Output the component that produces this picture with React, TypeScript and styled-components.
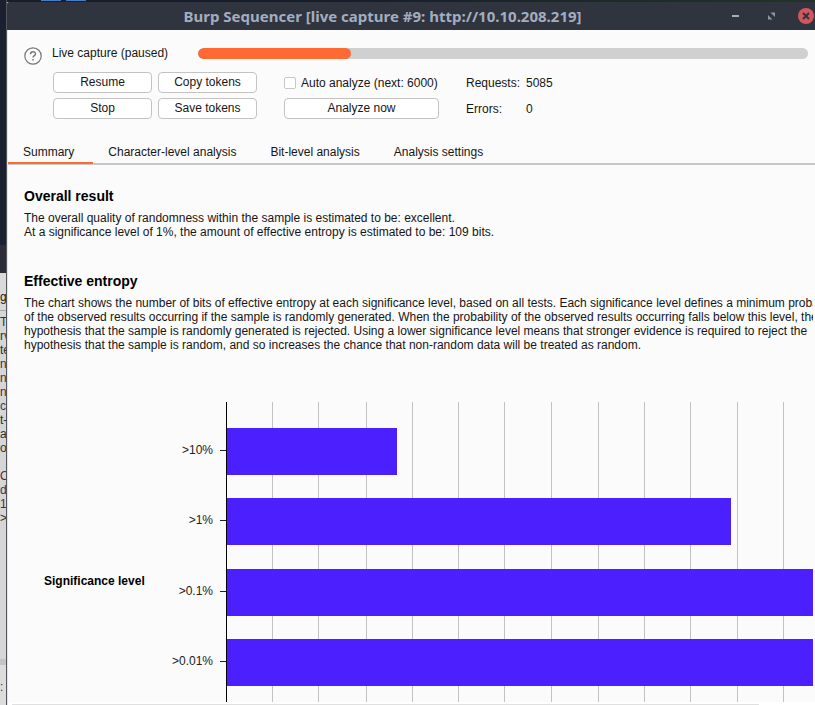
import React from "react";
import styled, { createGlobalStyle } from "styled-components";

const GlobalStyle = createGlobalStyle`
  * { box-sizing: border-box; }
  html, body, #root { height: 100%; }
  body {
    margin: 0;
    overflow: hidden;
    background: #1a2030;
    color: #161616;
    font-family: "Liberation Sans", Arial, sans-serif;
    font-size: 12px;
    line-height: 14px;
  }
`;

const Desktop = styled.div`
  display: grid;
  grid-template-columns: 7px minmax(0, 1fr);
  height: 100vh;
  overflow: hidden;
`;

const BackWindow = styled.aside`
  display: flex;
  flex-direction: column;
  overflow: hidden;
  padding-top: 245px;
  border-right: 1px solid #55565c;
  white-space: nowrap;
`;

const BackTitle = styled.div`
  flex: none;
  height: 28px;
  background: #2b2c37;
`;

const BackHeading = styled.div`
  flex: none;
  height: 38px;
  padding-top: 17px;
  background: #d9d9d9;
  border-bottom: 1px solid #a9a9a9;
`;

const BackLines = styled.div`
  display: flex;
  flex: 1;
  flex-direction: column;
  padding-top: 4px;
  background: #d6d6d6;
`;

const BackLine = styled.span<{ $color?: string }>`
  height: 14px;
  min-height: 14px;
  color: ${(p) => p.$color ?? "#2e2e34"};
`;

const BackFooter = styled.div`
  flex: none;
  height: 46px;
  padding-top: 15px;
  background: #dcdcdc;
  border-top: 6px solid #c4c4c4;
  color: #702040;
`;

const Front = styled.div`
  display: flex;
  flex-direction: column;
  min-width: 0;
`;

const TopStrip = styled.div`
  display: flex;
  flex: none;
  gap: 5px;
  height: 2px;
  padding-left: 34px;
  background: linear-gradient(90deg, #171d2b 40%, #223326);
`;

const TopMark = styled.span`
  width: 20px;
  height: 1px;
  background: #4a7cc4;
`;

const AppWindow = styled.main`
  display: flex;
  flex: 1;
  flex-direction: column;
  min-height: 0;
  background: #fbfbfb;
  border-left: 1px solid #e4e4e4;
`;

const TitleBar = styled.header`
  display: grid;
  grid-template-columns: minmax(0, 1fr) auto;
  flex: none;
  align-items: center;
  height: 28px;
  margin-left: -1px;
  padding-right: 1px;
  background: #2f343f;
  border-radius: 2px 0 0 0;
`;

const Title = styled.h1`
  margin: 0;
  padding-left: 30px;
  color: #a3adbf;
  font-family: "Noto Sans", "Open Sans", sans-serif;
  font-size: 15px;
  font-weight: 700;
  line-height: 28px;
  text-align: center;
  white-space: nowrap;
`;

const WindowButtons = styled.div`
  display: flex;
  gap: 19px;
`;

const WindowButton = styled.button`
  display: flex;
  width: 16px;
  height: 16px;
  padding: 0;
  background: none;
  border: 0;
`;

const Controls = styled.section`
  display: flex;
  flex: none;
  gap: 9px;
  padding: 15px 7px 0 15px;
`;

const HelpButton = styled.button`
  display: flex;
  align-items: center;
  width: 20px;
  height: 22px;
  padding: 0;
  background: none;
  border: 0;
`;

const ControlsBody = styled.div`
  flex: 1;
  min-width: 0;
`;

const ProgressRow = styled.div`
  display: grid;
  grid-template-columns: 146px minmax(0, 1fr);
  align-items: center;
  height: 16px;
`;

const ProgressTrack = styled.div`
  height: 11px;
  overflow: hidden;
  background: #d0d0d0;
  border-radius: 6px;
`;

const ProgressFill = styled.div`
  height: 100%;
  background: #ff6a33;
  border-radius: 6px;
`;

const ControlsRow = styled.div`
  display: flex;
  gap: 27px;
  margin-top: 11px;
  padding-left: 1px;
`;

const ControlGrid = styled.div<{ $columns: string }>`
  display: grid;
  grid-template-columns: ${(p) => p.$columns};
  grid-auto-rows: 21px;
  gap: 5px 6px;
  align-items: center;
`;

const PushButton = styled.button`
  height: 21px;
  padding: 0;
  color: inherit;
  font: inherit;
  line-height: 19px;
  background: #fff;
  border: 1px solid #c3c3c3;
  border-radius: 4px;
`;

const CheckLabel = styled.label`
  display: flex;
  align-items: center;
  gap: 5px;
  white-space: nowrap;
`;

const CheckBox = styled.input`
  width: 12px;
  height: 12px;
  margin: 0;
  appearance: none;
  background: #fff;
  border: 1px solid #c8c8c8;
  border-radius: 2px;
`;

const Tabs = styled.nav`
  display: flex;
  flex: none;
  height: 46px;
  align-items: flex-end;
  border-bottom: 2px solid #c8c8c8;
`;

const Tab = styled.button<{ $active?: boolean }>`
  height: 22px;
  margin-bottom: -1px;
  padding: 0 19px 1px 15px;
  color: inherit;
  font: inherit;
  background: none;
  border: 0;
  border-bottom: 2px solid ${(p) => (p.$active ? "#ff6a33" : "transparent")};
`;

const Report = styled.section`
  flex: 1;
  min-height: 0;
  margin-right: 2px;
  padding-top: 23px;
  overflow: hidden;
`;

const Block = styled.article`
  padding-left: 16px;
  margin-bottom: 34px;
`;

const Heading = styled.h2`
  margin: 0 0 7px;
  color: #000;
  font-size: 14px;
  font-weight: 700;
  line-height: 16px;
`;

const Line = styled.p`
  margin: 0;
  white-space: nowrap;
`;

const Chart = styled.svg`
  display: block;
  margin-top: 50px;
`;

const ScrollBar = styled.div`
  flex: none;
  height: 3px;
  padding: 2px 0 0 4px;
  background: #fff;
`;

const ScrollThumb = styled.div`
  width: 93%;
  height: 1px;
  background: #e0e0e0;
`;

const backText = [
  { text: "T" }, { text: "rv" }, { text: "te" }, { text: "n", color: "#6b2038" },
  { text: "n", color: "#6b2038" }, { text: "n", color: "#6b2038" }, { text: "c", color: "#23426b" },
  { text: "t-" }, { text: "ar" }, { text: "or" }, { text: "" },
  { text: "OC", color: "#6b2038" }, { text: "de", color: "#23426b" }, { text: "1", color: "#6b2038" }, { text: ">" },
];

const tabs = ["Summary", "Character-level analysis", "Bit-level analysis", "Analysis settings"];

const gridLines = [264, 310, 358, 404, 450, 496, 543, 590, 636, 682, 729, 775];

const bars = [
  { label: ">10%", y: 26, width: 170 },
  { label: ">1%", y: 96, width: 504 },
  { label: ">0.1%", y: 167, width: 600 },
  { label: ">0.01%", y: 237, width: 600 },
];

export default function App() {
  return (
    <>
      <GlobalStyle />
      <Desktop>
        <BackWindow aria-hidden="true">
          <BackTitle />
          <BackHeading>gt</BackHeading>
          <BackLines>
            {backText.map((l, i) => (
              <BackLine key={i} $color={l.color}>{l.text}</BackLine>
            ))}
          </BackLines>
          <BackFooter>:</BackFooter>
        </BackWindow>
        <Front>
          <TopStrip>
            <TopMark />
            <TopMark />
          </TopStrip>
          <AppWindow>
            <TitleBar>
              <Title>Burp Sequencer [live capture #9: http://10.10.208.219]</Title>
              <WindowButtons>
                <WindowButton aria-label="Minimize">
                  <svg width="16" height="16"><rect x="4" y="7" width="7" height="2" fill="#a3adbf" /></svg>
                </WindowButton>
                <WindowButton aria-label="Restore">
                  <svg width="16" height="16" fill="#8f96a3">
                    <path d="M7.5 4.5H12V9zM5 7v4.500h4.500z" />
                  </svg>
                </WindowButton>
                <WindowButton aria-label="Close">
                  <svg width="16" height="16">
                    <circle cx="8" cy="8" r="8" fill="#d2575d" />
                    <path d="M5 5l6 6M11 5l-6 6" stroke="#2f343f" strokeWidth="2" />
                  </svg>
                </WindowButton>
              </WindowButtons>
            </TitleBar>
            <Controls>
              <HelpButton aria-label="Help">
                <svg width="20" height="20" fill="none" stroke="#777" strokeWidth="1.2">
                  <circle cx="10" cy="10" r="8.2" />
                  <path d="M7.5 8.2c0-3.2 5-3.1 5-.3 0 1.7-2.5 1.8-2.5 3.7" strokeWidth="1.4" />
                  <path d="M10 13v1.6" strokeWidth="1.5" />
                </svg>
              </HelpButton>
              <ControlsBody>
                <ProgressRow>
                  <span id="capture-status">Live capture (paused)</span>
                  <ProgressTrack role="progressbar" aria-labelledby="capture-status" aria-valuenow={25}>
                    <ProgressFill style={{ width: "25%" }} />
                  </ProgressTrack>
                </ProgressRow>
                <ControlsRow>
                  <ControlGrid $columns="99px 99px">
                    <PushButton>Resume</PushButton>
                    <PushButton>Copy tokens</PushButton>
                    <PushButton>Stop</PushButton>
                    <PushButton>Save tokens</PushButton>
                  </ControlGrid>
                  <ControlGrid $columns="155px">
                    <CheckLabel>
                      <CheckBox type="checkbox" />
                      Auto analyze (next: 6000)
                    </CheckLabel>
                    <PushButton>Analyze now</PushButton>
                  </ControlGrid>
                  <ControlGrid $columns="54px auto">
                    <span>Requests:</span>
                    <span>5085</span>
                    <span>Errors:</span>
                    <span>0</span>
                  </ControlGrid>
                </ControlsRow>
              </ControlsBody>
            </Controls>
            <Tabs>
              {tabs.map((t, i) => (
                <Tab key={t} $active={i === 0}>{t}</Tab>
              ))}
            </Tabs>
            <Report>
              <Block>
                <Heading>Overall result</Heading>
                <Line>The overall quality of randomness within the sample is estimated to be: excellent.</Line>
                <Line>At a significance level of 1%, the amount of effective entropy is estimated to be: 109 bits.</Line>
              </Block>
              <Block>
                <Heading>Effective entropy</Heading>
                <Line>The chart shows the number of bits of effective entropy at each significance level, based on all tests. Each significance level defines a minimum probability</Line>
                <Line>of the observed results occurring if the sample is randomly generated. When the probability of the observed results occurring falls below this level, the</Line>
                <Line>hypothesis that the sample is randomly generated is rejected. Using a lower significance level means that stronger evidence is required to reject the</Line>
                <Line>hypothesis that the sample is random, and so increases the chance that non-random data will be treated as random.</Line>
              </Block>
              <Chart width="820" height="300" fontSize="12" role="img" aria-label="Effective entropy by significance level">
                {gridLines.map((x) => (
                  <rect key={x} x={x} y="0" width="1" height="300" fill="#c2c2c2" />
                ))}
                <text x="36" y="183" fontWeight="700" fill="#000">Significance level</text>
                {bars.map((b) => (
                  <g key={b.label}>
                    <rect x="219" y={b.y} width={b.width} height="47" fill="#4c1fff" />
                    <rect x="212" y={b.y + 22} width="6" height="1" fill="#222" />
                    <text x="205" y={b.y + 26} textAnchor="end" fill="#222">{b.label}</text>
                  </g>
                ))}
                <rect x="218" y="0" width="1" height="300" fill="#000" />
              </Chart>
            </Report>
            <ScrollBar>
              <ScrollThumb />
            </ScrollBar>
          </AppWindow>
        </Front>
      </Desktop>
    </>
  );
}
